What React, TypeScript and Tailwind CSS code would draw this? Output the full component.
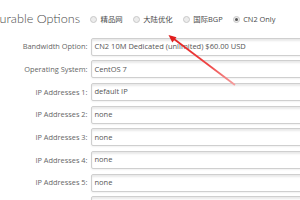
import React from "react";

const rows: [string, string][] = [
  ["Bandwidth Option:", "CN2 10M Dedicated (unlimited) $60.00 USD"],
  ["Operating System:", "CentOS 7"],
  ["IP Addresses 1:", "default IP"],
  ["IP Addresses 2:", "none"],
  ["IP Addresses 3:", "none"],
  ["IP Addresses 4:", "none"],
  ["IP Addresses 5:", "none"],
  ["", ""],
];

const radios = [
  { label: "精品网", checked: false },
  { label: "大陆优化", checked: false },
  { label: "国际BGP", checked: false },
  { label: "CN2 Only", checked: true },
];

export default function App() {
  return (
    <div
      className="relative w-[300px] h-[200px] overflow-hidden bg-white"
      style={{ fontFamily: '"Open Sans", "Noto Sans CJK SC", sans-serif' }}
    >
      <div className="flex items-center h-[37.8px] pt-[1px]">
        <div className="w-[80px] shrink-0 flex justify-end whitespace-nowrap">
          <span
            className="text-[12.6px] font-light text-[#4a4a4a]"
            style={{ fontFamily: 'Lato, "Open Sans", sans-serif' }}
          >
            Configurable Options
          </span>
        </div>
        <div className="flex items-center ml-[10px] gap-[10px] text-[7.4px] text-[#4a4a4a] whitespace-nowrap">
          {radios.map((r) => (
            <div key={r.label} className="flex items-center gap-[3.5px]">
              <span className="w-[7px] h-[7px] rounded-full border border-[#c8c8c8] bg-[#ececec] flex items-center justify-center">
                {r.checked && <span className="w-[3px] h-[3px] rounded-full bg-[#555]" />}
              </span>
              <span>{r.label}</span>
            </div>
          ))}
        </div>
      </div>
      <div className="flex flex-col gap-[4.67px]">
        {rows.map(([label, value], i) => (
          <div key={i} className="flex items-center h-[18px]">
            <div className="w-[87.5px] shrink-0 text-right text-[7.4px] text-[#666] whitespace-nowrap">
              {label}
            </div>
            <div className="ml-[3px] w-[260px] shrink-0 h-[18px] flex items-center border border-[#cfcfcf] rounded-[2px] bg-white shadow-[inset_0_2px_2px_rgba(0,0,0,0.09),0_1px_2px_rgba(0,0,0,0.06)] px-[3px] text-[7.5px] text-[#555] whitespace-nowrap">
              {value}
            </div>
          </div>
        ))}
      </div>
      <svg
        className="absolute left-0 top-0 pointer-events-none"
        width="300"
        height="200"
        viewBox="0 0 300 200"
      >
        <defs>
          <linearGradient id="ag" x1="235" y1="85" x2="169" y2="35" gradientUnits="userSpaceOnUse">
            <stop offset="0" stopColor="#f5a0a0" />
            <stop offset="0.4" stopColor="#ef4444" />
            <stop offset="1" stopColor="#e11d1d" />
          </linearGradient>
        </defs>
        <line x1="235" y1="85" x2="172" y2="37.5" stroke="url(#ag)" strokeWidth="1.8" />
        <polygon points="168.5,35 176.5,37.2 172.3,42.5" fill="#e11d1d" />
      </svg>
    </div>
  );
}
